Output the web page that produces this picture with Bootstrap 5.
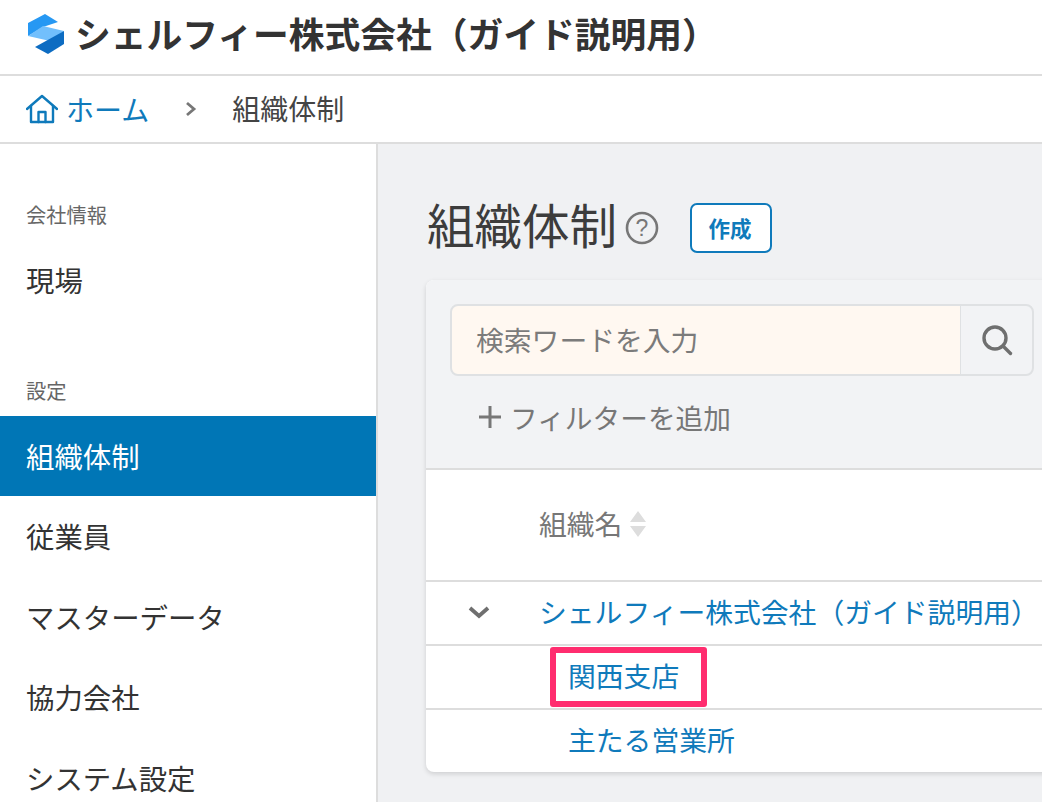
<!doctype html>
<html lang="ja"><head><meta charset="utf-8"><title>組織体制</title>
<link rel="stylesheet" href="https://cdn.jsdelivr.net/npm/bootstrap@5.3.0/dist/css/bootstrap.min.css">
<style>
html,body{height:802px;overflow:hidden}
body{font-family:"Noto Sans CJK JP","Liberation Sans",sans-serif;color:#333;background:#fff}
a{text-decoration:none;color:#0f7abb}
.top-bar{height:76px;border-bottom:2px solid #ddd;padding:0 0 6px 28px;gap:12px}
.top-title{font-size:35.75px;font-weight:700;color:#333;line-height:1;white-space:nowrap;margin-left:-1px;margin-bottom:2px}
.crumbs{height:68px;border-bottom:2px solid #ddd;padding-left:26px;font-size:28px;white-space:nowrap}
.crumbs .sep{margin:0 35px 0 36px}
.crumbs .here{font-size:28px;color:#444;margin-bottom:2px}
.body-wrap{height:658px;overflow:hidden}
.side-col{width:378px;flex:none;border-right:2px solid #ddd;padding-top:58px;background:#fff}
.side-label{font-size:20.3px;color:#666;padding-left:26px;height:24px;line-height:24px}
.side-first{margin-top:14px}
.side-link{height:80.5px;line-height:79px;padding:0 0 0 26px;font-size:28.4px;color:#333;border-radius:0}
.side-link.active-item{background:#0076b6;color:#fff}
.side-gap{height:57px}
.side-label-set{margin-bottom:14px}
.main-col{flex:1;min-width:0;background:#f0f1f3;padding:47px 0 0 48px;position:relative}
.page-h{height:76px;margin-left:1px;margin-bottom:13px}
.page-h h1{font-size:47.5px;font-weight:400;margin:0 0 10px;color:#3c3c3c;line-height:1}
.make-btn{background:#fff;border:2px solid #0f7abb;border-radius:7px;color:#0f7abb;font-size:21.5px;font-weight:700;width:82px;height:50px;padding:0 2px 0 0;margin-left:31px;margin-bottom:2px}
.make-btn:hover{background:#fff;color:#0f7abb}
.help-ic{margin-left:8px;margin-bottom:2px}
.panel{width:660px;height:492px;background:#fff;border:0;border-radius:8px;box-shadow:0 2px 5px rgba(0,0,0,.14);overflow:hidden}
.panel-top{background:#f2f3f5;height:190px;flex:none;border-bottom:2px solid #ddd;padding:24px 0 0 24px}
.find-group{width:584px;height:72px}
.find-group .form-control{background:#fff8f1;border:2px solid #dfe1e3;border-right-width:1px;font-size:27.8px;padding:0 0 2px 24px;border-radius:8px 0 0 8px;height:72px}
.find-group .form-control::placeholder{color:#7b7b7b}
.find-btn{width:74px;background:#f2f3f5;border:2px solid #dfe1e3;border-left-width:1px;border-radius:0 8px 8px 0;padding:0}
.add-filter{font-size:27.7px;color:#777;margin-top:23px;padding-left:28px;line-height:36px;gap:8px}
.org-table{margin:0;width:100%;table-layout:fixed}
.org-table td,.org-table th{border-bottom:2px solid #ddd;padding:0 0 2px;vertical-align:middle;font-size:27.8px;font-weight:400;white-space:nowrap;box-shadow:none}
.org-table tr:last-child td{border-bottom:0;height:63px}
.org-table th{height:111px;color:#777}
.org-table td{height:64px}
.org-table .c1{width:113px;padding-right:8px}
.org-table th .head-in{gap:8px}
.org-table .kid{padding-left:29px}
.call-box{position:absolute;left:172px;top:503px;width:157px;height:60px;border:6px solid #ff2d6f;border-radius:3px;pointer-events:none}
</style></head><body>
<header class="top-bar d-flex align-items-center">
<svg width="36" height="40" viewBox="0 0 36 40"><path d="M0 9 17 0l13 8-15 5-15 9z" fill="#2698f3"/><path d="M0 22 15 12l21 5-14 10z" fill="#72bffc"/><path d="M36 17v13l-16 10-13-7z" fill="#0d6cc2"/></svg>
<span class="top-title">シェルフィー株式会社（ガイド説明用）</span>
</header>
<nav class="crumbs d-flex align-items-center">
<a href="#" class="d-flex align-items-center"><svg width="32" height="30" viewBox="0 0 32 30" fill="none" stroke="#0f7abb" stroke-width="2.4" stroke-linejoin="round" stroke-linecap="round"><path d="M1 15 16 2l15 13"/><path d="M5 12v16h22V12"/><path d="M12.500 28V18h7v10"/></svg><span class="ms-2">ホーム</span></a>
<svg class="sep" width="12" height="16" viewBox="0 0 12 16" fill="none" stroke="#777" stroke-width="2.8"><path d="M2 2l7 6-7 6"/></svg>
<span class="here">組織体制</span>
</nav>
<div class="body-wrap d-flex">
<aside class="side-col">
<div class="side-label">会社情報</div>
<nav class="nav flex-column side-first"><a class="nav-link side-link" href="#">現場</a></nav>
<div class="side-gap"></div>
<div class="side-label side-label-set">設定</div>
<nav class="nav flex-column">
<a class="nav-link side-link active-item" href="#">組織体制</a>
<a class="nav-link side-link" href="#">従業員</a>
<a class="nav-link side-link" href="#">マスターデータ</a>
<a class="nav-link side-link" href="#">協力会社</a>
<a class="nav-link side-link" href="#">システム設定</a>
</nav>
</aside>
<main class="main-col">
<div class="page-h d-flex align-items-center">
<h1>組織体制</h1>
<svg class="help-ic" width="34" height="34" viewBox="0 0 34 34"><circle cx="17" cy="17" r="15" fill="none" stroke="#777" stroke-width="2.6"/><text x="17" y="25" font-size="23" text-anchor="middle" fill="#777" font-family="Liberation Sans">?</text></svg>
<button class="btn make-btn" type="button">作成</button>
</div>
<section class="card panel">
<div class="panel-top">
<div class="input-group find-group">
<input class="form-control" type="text" placeholder="検索ワードを入力">
<button class="btn find-btn" type="button"><svg width="32" height="32" viewBox="0 0 32 32" fill="none" stroke="#6f6f6f" stroke-width="3.4" stroke-linecap="round"><circle cx="14" cy="14" r="11"/><path d="M22 22 29.500 29.500"/></svg></button>
</div>
<div class="add-filter d-flex align-items-center"><svg width="24" height="24" viewBox="0 0 24 24" stroke="#777" stroke-width="3"><path d="M12 1v22M1 12h22"/></svg><span>フィルターを追加</span></div>
</div>
<table class="table org-table">
<thead><tr><th class="c1"></th><th><span class="head-in d-inline-flex align-items-center">組織名<svg width="16" height="26" viewBox="0 0 16 26" fill="#ddd"><path d="M8 0l8 11H0zM0 15h16L8 26z"/></svg></span></th></tr></thead>
<tbody>
<tr><td class="c1"><svg class="d-block mx-auto" width="24" height="15" viewBox="0 0 24 15" fill="none" stroke="#6f6f6f" stroke-width="3.8"><path d="M3 3l9 8 9-8"/></svg></td><td><a href="#">シェルフィー株式会社（ガイド説明用）</a></td></tr>
<tr><td class="c1"></td><td class="kid"><a href="#">関西支店</a></td></tr>
<tr><td class="c1"></td><td class="kid"><a href="#">主たる営業所</a></td></tr>
</tbody>
</table>
</section>
<div class="call-box"></div>
</main>
</div>
<script src="https://cdn.jsdelivr.net/npm/bootstrap@5.3.0/dist/js/bootstrap.bundle.min.js"></script>
</body></html>
